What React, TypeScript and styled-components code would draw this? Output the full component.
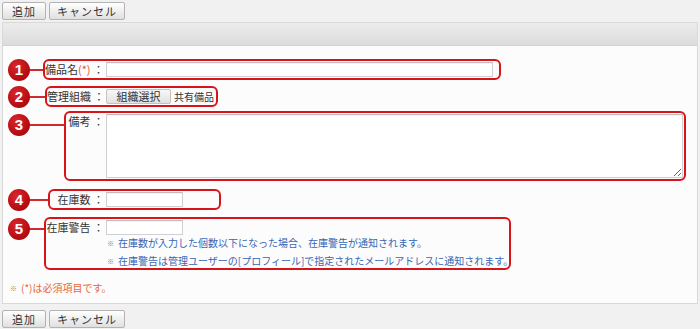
import styled, { createGlobalStyle } from 'styled-components';

const GlobalStyle = createGlobalStyle`
  html, body {
    margin: 0;
    background: #f1f1f1;
  }
  body {
    font-family: "Noto Sans CJK JP", "Noto Sans", sans-serif;
    color: #333;
  }
`;

const Page = styled.div`
  width: 696px;
  padding: 0 2px;
`;

const Toolbar = styled.div<{ $top: number }>`
  display: flex;
  gap: 3px;
  height: 18px;
  margin-top: ${(p) => p.$top}px;
`;

const Button = styled.button<{ $width: number }>`
  width: ${(p) => p.$width}px;
  height: 18px;
  padding: 0;
  border: 1px solid #b3b3b3;
  border-radius: 2px;
  background: linear-gradient(#ffffff, #e0e0e0);
  font: 11px/16px "Noto Sans CJK JP", sans-serif;
  color: #333;
  letter-spacing: 1px;
`;

const Panel = styled.section`
  margin-top: 2px;
  border: 1px solid #d9d9d9;
  background: #fcfcfc;
`;

const PanelHeader = styled.div`
  height: 22px;
  background: linear-gradient(#ececec, #dcdcdc);
  border-bottom: 1px solid #d2d2d2;
`;

const PanelBody = styled.div`
  padding: 13px 0 8px;
`;

const Row = styled.div<{ $gap: number }>`
  display: flex;
  align-items: flex-start;
  margin-top: ${(p) => p.$gap}px;
`;

const Gutter = styled.div<{ $left: number; $badgeTop?: number }>`
  display: flex;
  align-items: center;
  width: ${(p) => p.$left - 3}px;
  flex-shrink: 0;
  align-self: ${(p) => (p.$badgeTop === undefined ? 'stretch' : 'flex-start')};
  margin-top: ${(p) => (p.$badgeTop ?? 0) + 1}px;
`;

const Badge = styled.span`
  width: 22px;
  height: 22px;
  margin: -1px 0 -1px 5px;
  flex-shrink: 0;
  border-radius: 50%;
  background: radial-gradient(circle at 38% 32%, #d9272c, #b10a10 70%, #9c070c);
  color: #fff;
  font: bold 15px/22px "Liberation Sans", Arial, sans-serif;
  text-align: center;
`;

const Connector = styled.span`
  flex: 1;
  height: 2px;
  background: #cf2a2f;
`;

const Outline = styled.div<{ $width: number }>`
  display: flex;
  align-items: flex-start;
  box-sizing: border-box;
  width: ${(p) => p.$width}px;
  padding: 1px 0;
  border: 2px solid #d8141b;
  border-radius: 6px;
`;

const Label = styled.div<{ $left: number }>`
  width: ${(p) => 104 - p.$left - 2}px;
  flex-shrink: 0;
  margin-right: 2px;
  font-size: 11px;
  line-height: 15px;
  text-align: right;
  white-space: nowrap;
  color: #333;
`;

const Required = styled.span`
  color: #e4542e;
`;

const Field = styled.div`
  display: flex;
  flex-direction: column;
`;

const Inline = styled.div`
  display: flex;
  align-items: center;
  gap: 3px;
  height: 15px;
  font-size: 10px;
  white-space: nowrap;
`;

const TextInput = styled.input<{ $width: number }>`
  box-sizing: border-box;
  width: ${(p) => p.$width}px;
  height: 15px;
  margin: 0;
  padding: 0 3px;
  border: 1px solid #d0d0d0;
  border-top-color: #bdbdbd;
  background: #fff;
  box-shadow: inset 0 1px 1px rgba(0, 0, 0, 0.06);
`;

const TextArea = styled.textarea`
  box-sizing: border-box;
  width: 577px;
  height: 64px;
  margin: 0;
  padding: 2px;
  border: 1px solid #d0d0d0;
  border-top-color: #bdbdbd;
  background: #fff;
  box-shadow: inset 0 1px 1px rgba(0, 0, 0, 0.06);
  display: block;
`;

const SmallButton = styled.button`
  height: 15px;
  width: 65px;
  padding: 0;
  border: 1px solid #c2c2c2;
  border-radius: 2px;
  background: linear-gradient(#f7f7f7, #e2e2e2);
  font: 11px/13px "Noto Sans CJK JP", sans-serif;
  color: #333;
`;

const Notes = styled.ul`
  list-style: none;
  margin: 2px 0 0 1px;
  padding: 0;
  display: flex;
  flex-direction: column;
  gap: 6px;
`;

const Note = styled.li`
  height: 12px;
  font-size: 10px;
  line-height: 12px;
  color: #3567b5;
  white-space: nowrap;
`;

const Mark = styled.span`
  display: inline-block;
  font-size: 7px;
  line-height: 12px;
  height: 12px;
  margin-right: 4px;
  vertical-align: top;
  color: #5a83c4;
`;

const Footnote = styled.p`
  margin: 11px 0 0 7px;
  height: 14px;
  font-size: 10px;
  line-height: 14px;
  color: #e8663a;
`;

const FootMark = styled.span`
  display: inline-block;
  font-size: 7px;
  line-height: 14px;
  height: 14px;
  vertical-align: top;
  margin-right: 4px;
`;

const ButtonBar = ({ top }: { top: number }) => (
  <Toolbar $top={top}>
    <Button $width={44}>追加</Button>
    <Button $width={76}>キャンセル</Button>
  </Toolbar>
);

export default function App() {
  return (
    <Page>
      <GlobalStyle />
      <ButtonBar top={2} />
      <Panel>
        <PanelHeader />
        <PanelBody>
          <Row $gap={0}>
            <Gutter $left={43}>
              <Badge>1</Badge>
              <Connector />
            </Gutter>
            <Outline $width={458}>
              <Label $left={43}>
                備品名<Required>(*)</Required> ：
              </Label>
              <TextInput $width={387} />
            </Outline>
          </Row>

          <Row $gap={6}>
            <Gutter $left={45}>
              <Badge>2</Badge>
              <Connector />
            </Gutter>
            <Outline $width={173}>
              <Label $left={45}>管理組織 ：</Label>
              <Inline>
                <SmallButton>組織選択</SmallButton>
                共有備品
              </Inline>
            </Outline>
          </Row>

          <Row $gap={4}>
            <Gutter $left={64} $badgeTop={3}>
              <Badge>3</Badge>
              <Connector />
            </Gutter>
            <Outline $width={622}>
              <Label $left={64}>備考 ：</Label>
              <TextArea />
            </Outline>
          </Row>

          <Row $gap={8}>
            <Gutter $left={48}>
              <Badge>4</Badge>
              <Connector />
            </Gutter>
            <Outline $width={173}>
              <Label $left={48}>在庫数 ：</Label>
              <TextInput $width={77} />
            </Outline>
          </Row>

          <Row $gap={7}>
            <Gutter $left={44} $badgeTop={1}>
              <Badge>5</Badge>
              <Connector />
            </Gutter>
            <Outline $width={467}>
              <Label $left={44}>在庫警告 ：</Label>
              <Field>
                <TextInput $width={77} />
                <Notes>
                  <Note>
                    <Mark>※</Mark>在庫数が入力した個数以下になった場合、在庫警告が通知されます。
                  </Note>
                  <Note>
                    <Mark>※</Mark>在庫警告は管理ユーザーの[プロフィール]で指定されたメールアドレスに通知されます。
                  </Note>
                </Notes>
              </Field>
            </Outline>
          </Row>

          <Footnote>
            <FootMark>※</FootMark>(*)は必須項目です。
          </Footnote>
        </PanelBody>
      </Panel>
      <ButtonBar top={6} />
    </Page>
  );
}
